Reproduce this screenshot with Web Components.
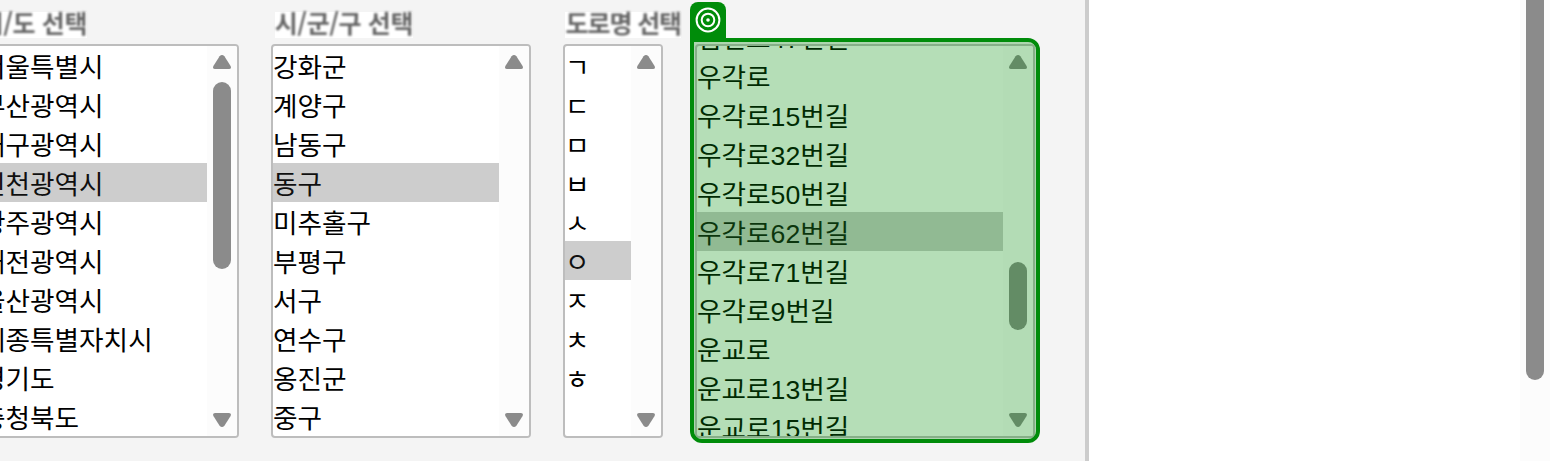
<!DOCTYPE html>
<html lang="ko"><head><meta charset="utf-8"><title>도로명 선택</title>
<style>
html,body{margin:0;height:100%;overflow:hidden;background:#fff}
body{font-family:"Liberation Sans","Noto Sans CJK KR",sans-serif}
</style></head><body>
<address-page>
  <pick-column label="시/도 선택" style="--w:260px;--lx:1px;--lw:107px" selected="3" thumb="36,187" items="서울특별시,부산광역시,대구광역시,인천광역시,광주광역시,대전광역시,울산광역시,세종특별자치시,경기도,충청북도"></pick-column>
  <pick-column label="시/군/구 선택" style="--w:260px;--lx:4px;--lw:138px" selected="3" items="강화군,계양구,남동구,동구,미추홀구,부평구,서구,연수구,옹진군,중구"></pick-column>
  <pick-column label="도로명 선택" style="--w:100px;--lx:2px;--lw:116px;--ls:-1.1px" selected="5" items="ㄱ,ㄷ,ㅁ,ㅂ,ㅅ,ㅇ,ㅈ,ㅊ,ㅎ"></pick-column>
  <target-highlight>
    <pick-column style="--w:340px;--shift:-29px" selected="5" thumb="216,68" items="염전로47번길,우각로,우각로15번길,우각로32번길,우각로50번길,우각로62번길,우각로71번길,우각로9번길,운교로,운교로13번길,운교로15번길"></pick-column>
  </target-highlight>
</address-page>
<script>
class ScrollRail extends HTMLElement{
  connectedCallback(){
    const [top,len]=(this.getAttribute('thumb')||'0,0').split(',');
    this.attachShadow({mode:'open'}).innerHTML=`<style>
    :host{display:grid;grid-template-rows:36px 1fr 36px;width:30px;flex:none;background:#fcfcfc;justify-items:center}
    svg{display:block;width:18px;height:14px;fill:#8b8b8b;margin-top:9px}
    .down{margin-top:13px}
    .thumb{width:18px;height:${len}px;margin-top:${Math.max(0,top-36)}px;border-radius:9px;background:#8b8b8b}
    </style>
    <svg viewBox="0 0 18 14"><path d="M6.6 1.3Q9-1.3 11.4 1.3L17.6 11Q18.7 14 16 14H2Q-.7 14 .4 11Z"/></svg>
    <div class="thumb"></div>
    <svg class="down" viewBox="0 0 18 14"><path d="M6.6 12.7Q9 15.3 11.4 12.7L17.6 3Q18.7 0 16 0H2Q-.7 0 .4 3Z"/></svg>`;
  }
}
customElements.define('scroll-rail',ScrollRail);

class PickColumn extends HTMLElement{
  connectedCallback(){
    const sel=+this.getAttribute('selected'),label=this.getAttribute('label');
    this.attachShadow({mode:'open'}).innerHTML=`<style>
    :host{display:block;width:var(--w);flex:none}
    .head{height:32px;padding-top:12px}
    .label{display:block;width:var(--lw);height:26px;margin-left:var(--lx);background:#fff;white-space:nowrap}
    .label span{display:flex;justify-content:flex-end;font:700 25px/20px "Noto Sans CJK KR",sans-serif;letter-spacing:var(--ls,-.4px);color:#666;filter:blur(.8px)}
    .list{box-sizing:border-box;display:flex;height:394px;border:2px solid #bdbdbd;border-radius:4px;background:#fff;overflow:hidden}
    .rows{flex:1;min-width:0;overflow:hidden}
    .row{height:39px;line-height:45px;font-size:26.667px;white-space:nowrap;color:#000}
    .row:first-child{margin-top:var(--shift,0)}
    .row.on{background:#cdcdcd;color:#101010}
    </style>
    <div class="head">${label?`<div class="label"><span>${label}</span></div>`:''}</div>
    <div class="list"><div class="rows">${this.getAttribute('items').split(',').map((t,i)=>`<div class="row${i===sel?' on':''}">${t}</div>`).join('')}</div><scroll-rail thumb="${this.getAttribute('thumb')||'0,0'}"></scroll-rail></div>`;
  }
}
customElements.define('pick-column',PickColumn);

class TargetHighlight extends HTMLElement{
  connectedCallback(){
    this.attachShadow({mode:'open'}).innerHTML=`<style>
    :host{display:block;position:relative;flex:none}
    .box{position:absolute;box-sizing:border-box;left:-5px;right:-5px;top:38px;height:405px;border:4px solid #008c0a;border-radius:0 12px 12px 12px;background:rgba(4,144,10,.295);background-clip:padding-box}
    .tab{position:absolute;left:-5px;top:2px;width:36px;height:37px;background:#008c0a;border-radius:8px 8px 0 0}
    svg{display:block;margin:5px}
    </style><slot></slot><div class="box"></div>
    <div class="tab"><svg width="26" height="26" viewBox="0 0 26 26" fill="none" stroke="#fff" stroke-width="2"><circle cx="13" cy="13" r="11.4"/><circle cx="13" cy="13" r="6.3"/><circle cx="13" cy="13" r="1.8" fill="#fff" stroke="none"/></svg></div>`;
  }
}
customElements.define('target-highlight',TargetHighlight);

class AddressPage extends HTMLElement{
  connectedCallback(){
    this.attachShadow({mode:'open'}).innerHTML=`<style>
    :host{display:flex;height:461px;width:1550px;overflow:hidden;background:#fff}
    main{box-sizing:border-box;width:1089px;flex:none;display:flex;gap:32px;overflow:hidden;background:#f4f4f4;border-right:4px solid #ccc}
    main::before{content:"";flex:none;width:0;margin-left:-53px}
    .blank{flex:1}
    .rail{width:30px;display:flex;justify-content:center;background:#fcfcfc}
    .thumb{width:18px;height:380px;background:#8b8b8b;border-radius:0 0 9px 9px}
    </style><main><slot></slot></main><div class="blank"></div><div class="rail"><div class="thumb"></div></div>`;
  }
}
customElements.define('address-page',AddressPage);
</script></body></html>
